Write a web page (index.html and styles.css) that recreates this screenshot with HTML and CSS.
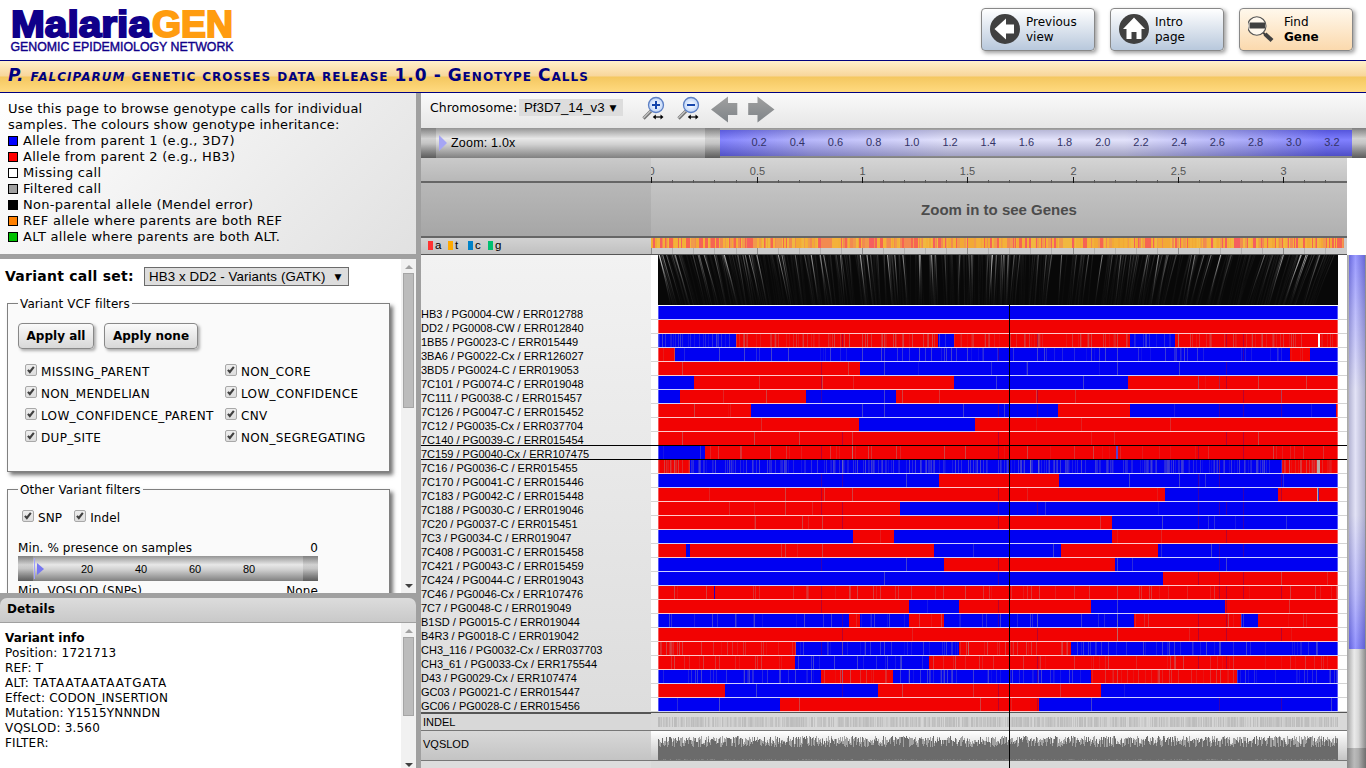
FILE: index.html
```html
<!DOCTYPE html>
<html lang="en">
<head>
<meta charset="utf-8">
<title>MalariaGEN - Genotype Calls</title>
<link rel="stylesheet" href="styles.css">
</head>
<body>
<svg class="defs" width="0" height="0"><defs>
<symbol id="check" viewBox="0 0 12 12"><path d="M2.300 5.800 4.600 8.400 9.400 2.200" fill="none" stroke="#404040" stroke-width="2.500"/></symbol>
</defs></svg>
<header class="top">
  <svg class="logo" width="240" height="56">
    <text x="11" y="36.500" class="logo-a" textLength="140" lengthAdjust="spacingAndGlyphs">Malaria</text>
    <text x="152" y="36.500" class="logo-b" textLength="81" lengthAdjust="spacingAndGlyphs">GEN</text>
    <text x="10.500" y="51" class="logo-c" textLength="223" lengthAdjust="spacingAndGlyphs">GENOMIC EPIDEMIOLOGY NETWORK</text>
  </svg>
  <nav class="actions">
    <button class="act blue"><svg width="30" height="30" viewBox="0 0 30 30"><circle cx="15" cy="15" r="15" fill="#404040"/><path d="M4.500 15 16 4.500V10.500H24V19.500H16V25.500Z" fill="#fff"/></svg><span>Previous<br>view</span></button>
    <button class="act blue"><svg width="30" height="30" viewBox="0 0 30 30"><circle cx="15" cy="15" r="15" fill="#404040"/><path d="M15 3.500 26 15H22.500V25H17.500V18H12.500V25H7.500V15H4Z" fill="#fff"/></svg><span>Intro<br>page</span></button>
    <button class="act cream"><svg width="30" height="30" viewBox="0 0 30 30"><path d="m15 18.500 2.500 2.500" stroke="#404040" stroke-width="2"/><path d="m17 20 7 6.500" stroke="#404040" stroke-width="4.200"/><circle cx="8.800" cy="12" r="9.200" fill="#fff8ee" stroke="#555" stroke-width="1.100"/><path d="M1.500 8.500h15.500v6H1.500z" fill="#404040"/></svg><span>Find<br><b>Gene</b></span></button>
  </nav>
</header>
<h1 class="title"><i>P. falciparum</i> genetic crosses data release 1.0 - Genotype Calls</h1>
<main class="main">
  <aside class="side">
    <section class="intro">
      <p>Use this page to browse genotype calls for individual<br>samples. The colours show genotype inheritance:</p>
      <ul>
        <li><i class="sw p1"></i>Allele from parent 1 (e.g., 3D7)</li>
        <li><i class="sw p2"></i>Allele from parent 2 (e.g., HB3)</li>
        <li><i class="sw miss"></i>Missing call</li>
        <li><i class="sw filt"></i>Filtered call</li>
        <li><i class="sw non"></i>Non-parental allele (Mendel error)</li>
        <li><i class="sw ref"></i>REF allele where parents are both REF</li>
        <li><i class="sw alt"></i>ALT allele where parents are both ALT.</li>
      </ul>
    </section>
    <section class="controls">
      <div class="controls-body">
        <div class="callset"><b>Variant call set:</b><span class="select">HB3 x DD2 - Variants (GATK)<i>▼</i></span></div>
        <fieldset class="vcf"><legend>Variant VCF filters</legend>
          <div class="btns"><button>Apply all</button><button>Apply none</button></div>
          <div class="checks">
            <label><svg class="cb"><use href="#check"/></svg>MISSING_PARENT</label><label><svg class="cb"><use href="#check"/></svg>NON_CORE</label>
            <label><svg class="cb"><use href="#check"/></svg>NON_MENDELIAN</label><label><svg class="cb"><use href="#check"/></svg>LOW_CONFIDENCE</label>
            <label><svg class="cb"><use href="#check"/></svg>LOW_CONFIDENCE_PARENT</label><label><svg class="cb"><use href="#check"/></svg>CNV</label>
            <label><svg class="cb"><use href="#check"/></svg>DUP_SITE</label><label><svg class="cb"><use href="#check"/></svg>NON_SEGREGATING</label>
          </div>
        </fieldset>
        <fieldset class="other"><legend>Other Variant filters</legend>
          <div class="types"><label><svg class="cb"><use href="#check"/></svg>SNP</label><label><svg class="cb"><use href="#check"/></svg>Indel</label></div>
          <div class="range-head"><span>Min. % presence on samples</span><span>0</span></div>
          <div class="range"><i class="cap"></i><div class="range-mid"><i class="bar"></i><i class="tri"></i><div class="nums"><span>20</span><span>40</span><span>60</span><span>80</span></div></div><i class="cap"></i></div>
          <div class="range-head second"><span>Min. VQSLOD (SNPs)</span><span>None</span></div>
        </fieldset>
      </div>
      <div class="scroll"><i class="up"></i><i class="thumb t1"></i><i class="down"></i></div>
    </section>
    <section class="details">
      <h2>Details</h2>
      <div class="details-row">
        <div class="details-body"><b>Variant info</b><br>Position: 1721713<br>REF: T<br>ALT: <span class="bp">TATAATAATAATGATA</span><br>Effect: CODON_INSERTION<br>Mutation: Y1515YNNNDN<br>VQSLOD: 3.560<br>FILTER:</div>
        <div class="scroll"><i class="up"></i><i class="thumb t2"></i><i class="down"></i></div>
      </div>
    </section>
  </aside>
  <section class="browser">
    <div class="toolbar"><span class="chr">Chromosome:</span><span class="chrsel">Pf3D7_14_v3<i>▼</i></span>
      <svg class="tools" width="140" height="34" viewBox="0 0 140 34">
        <defs><radialGradient id="lens"><stop offset="0" stop-color="#fff"/><stop offset="1" stop-color="#bfd5f8"/></radialGradient>
        <linearGradient id="arrow" x1="0" y1="0" x2="0" y2="1"><stop offset="0" stop-color="#a0a0a0"/><stop offset="1" stop-color="#7f8488"/></linearGradient></defs>
        <g id="glass"><path d="m2.500 25.500 7.500-7.500" stroke="#777" stroke-width="3.200"/><path d="m2.500 24.800 7-7" stroke="#ccc" stroke-width="1.200"/><circle cx="15" cy="12" r="7.500" fill="url(#lens)" stroke="#5c7fc4" stroke-width="1.300"/><path d="M13 24h8" stroke="#000" stroke-width="1.200"/><path d="m14.800 21.500-3 2.500 3 2.500zm4.700 0 3 2.500-3 2.500z" fill="#000"/></g>
        <use href="#glass" x="35"/>
        <path d="M11 12h8M15 8v8M46 12h8" stroke="#1646ac" stroke-width="2"/>
        <path d="M70 16.500 87 3.500V10H96.300V22H87V29.500Z" fill="url(#arrow)"/><path d="M133.500 16.500 116.500 3.500V10H107.200V22H116.500V29.500Z" fill="url(#arrow)"/>
      </svg>
    </div>
    <div class="navbar"><i class="cap"></i><div class="zoomer"><i class="tri"></i>Zoom: 1.0x</div><i class="cap"></i><div class="overview" id="overview"></div><i class="cap last"></i></div>
    <div class="ruler"><div class="rl"></div><svg id="ruler" width="696" height="25"></svg></div>
    <div class="genes"><div class="gl"></div><div class="gr">Zoom in to see Genes</div></div>
    <div class="seq"><div class="bases"><span><i class="a"></i>a</span><span><i class="t"></i>t</span><span><i class="c"></i>c</span><span><i class="g"></i>g</span></div><canvas id="seq" width="696" height="16"></canvas></div>
    <div class="lower">
      <div class="plots">
        <div class="geno"><ol class="names" id="names"></ol><canvas id="geno" width="696" height="457"></canvas></div>
        <div class="tracks"><div class="tnames"><div class="indel">INDEL</div><div class="vq">VQSLOD</div></div><canvas id="tracks" width="696" height="56"></canvas></div>
        <i class="line h1"></i><i class="line h2"></i><i class="line v"></i>
      </div>
      <div class="vscroll"><i class="vthumb"></i><i class="vrest"></i><i class="vend"></i></div>
    </div>
  </section>
</main>
<script src="plot.js"></script>
</body>
</html>
```

FILE: styles.css
```css
* { box-sizing: border-box; }
body { margin: 0; width: 1366px; height: 768px; overflow: hidden; background: #fff; font: 12px/15px "DejaVu Sans", Verdana, sans-serif; letter-spacing: .1px; color: #000; display: flex; flex-direction: column; }
button { font: inherit; letter-spacing: 0; color: inherit; padding: 0; }
canvas, svg { display: block; flex: none; }
.defs { position: absolute; }
.top { height: 60px; flex: none; display: flex; justify-content: space-between; letter-spacing: 0; }
.logo-a, .logo-b { font: bold 37px "Liberation Sans", Arial, sans-serif; fill: #10008a; stroke: #10008a; stroke-width: 2px; }
.logo-b { fill: #ff9c10; stroke: #ff9c10; }
.logo-c { font: 12.5px "Liberation Sans", Arial, sans-serif; fill: #10008a; stroke: #10008a; stroke-width: .4px; }
.actions { display: flex; gap: 15px; padding: 8px 13px 0 0; }
.act { width: 114px; height: 43px; display: flex; align-items: center; gap: 6px; padding-left: 8px; border: 1px solid #888; border-radius: 4px; text-align: left; box-shadow: 2px 2px 4px rgba(0,0,0,.4); }
.act svg { margin-bottom: 1px; }
.act.blue { background: linear-gradient(#fff, #b8c8dc); }
.act.cream { background: linear-gradient(#fff8ec, #fbd9ad); }
.title { margin: 0; height: 33px; flex: none; border-top: 1px solid #000080; border-bottom: 1px solid #000080; background: linear-gradient(#ffefcb, #f8d69a 49%, #f4c75f 51%, #ffda80); font: bold 17px/28px "DejaVu Sans", sans-serif; letter-spacing: 1.02px; word-spacing: -1px; font-variant: small-caps; color: #000080; padding-left: 8px; white-space: nowrap; }
.main { display: flex; height: 675px; }
.side { width: 421px; flex: none; border-right: 5px solid #a0a0a0; display: flex; flex-direction: column; }
.intro { height: 166px; flex: none; border-bottom: 5px solid #a0a0a0; padding: 8px; background: linear-gradient(135deg, #fff, #f0f0f0 50%, #e1e1e1); font-size: 13px; line-height: 16px; letter-spacing: .18px; white-space: nowrap; }
.intro p, .intro ul { margin: 0; padding: 0; list-style: none; }
.intro li { display: flex; align-items: center; gap: 5px; letter-spacing: .28px; }
.sw { width: 10px; height: 10px; border: 1px solid #000; }
.p1 { background: #00f; } .p2 { background: #f00; } .miss { background: #fff; } .filt { background: #a0a0a0; } .non { background: #000; } .ref { background: #ff8000; } .alt { background: #00c000; }
.controls { height: 339px; flex: none; border-bottom: 5px solid #a0a0a0; display: flex; overflow: hidden; }
.controls-body { width: 401px; padding: 8px 11px 0 7px; overflow: hidden; }
.callset { height: 19px; display: flex; align-items: center; margin: 0 0 10px -2px; font-size: 14px; letter-spacing: .25px; white-space: nowrap; }
.callset b { width: 139px; flex: none; }
.select { flex: none; border: 1px solid #6b6b6b; background: #ddd; width: 205px; height: 19px; display: flex; align-items: center; padding-left: 4px; font: 13.3px "Liberation Sans", Arial, sans-serif; letter-spacing: .1px; }
.select i, .chrsel i { font: 9px "DejaVu Sans", sans-serif; margin-left: 9px; }
fieldset { margin: 0 0 10px; width: 383px; min-width: 0; border: 1px solid #808080; background: #fafafa; padding: 0 10px; box-shadow: 3px 3px 4px rgba(0,0,0,.55); }
legend { padding: 0 2px; height: 15px; line-height: 16px; }
.vcf { height: 176px; } .other { height: 180px; }
.btns { display: flex; gap: 10px; margin-top: 12px; }
.btns button { width: 76px; height: 26px; font-weight: bold; border: 1px solid #888; border-radius: 4px; background: linear-gradient(#fafafa, #d8d8d8); box-shadow: 2px 2px 3px rgba(0,0,0,.3); }
.btns button + button { width: 94px; }
.checks { display: grid; grid-template-columns: 200px 150px; grid-auto-rows: 22px; margin: 12px 0 0 7px; letter-spacing: .34px; }
label { display: flex; align-items: center; gap: 4px; white-space: nowrap; }
.cb { width: 12px; height: 12px; margin-bottom: 4px; border: 1px solid #a8a8a8; border-radius: 2px; background: linear-gradient(#eee, #ddd); overflow: visible; }
.types { display: flex; gap: 12px; margin: 13px 0 0 4px; height: 16px; }
.range-head { display: flex; justify-content: space-between; width: 300px; margin-top: 15px; }
.range-head.second { margin-top: 3px; }
.range { width: 300px; height: 25px; display: flex; background: linear-gradient(#959595, #e8e8e8 35%, #d0d0d0 55%, #808080); }
.cap { width: 15px; flex: none; background: linear-gradient(rgba(0,0,0,.14), rgba(0,0,0,.08) 50%, rgba(0,0,0,.28)); }
.last { width: 14px; }
.range-mid { width: 270px; display: flex; align-items: center; }
.bar { width: 1px; height: 21px; margin-left: 1px; background: #a0a0ff; }
.tri { width: 0; border: solid transparent; border-width: 6px 0 6px 7px; border-left-color: #7777f0; margin-left: 2px; }
.nums { display: flex; font: 11px "Liberation Sans", Arial, sans-serif; letter-spacing: 0; margin-left: 16px; } .nums span { width: 54px; text-align: center; }
.scroll { width: 15px; flex: none; background: #f1f1f1; display: flex; flex-direction: column; align-items: center; }
.up { border: solid transparent; border-width: 0 4px 4px; border-bottom-color: #a0a0a0; margin: 6px 0 4px; }
.down { border: solid transparent; border-width: 4px 4px 0; border-top-color: #404040; margin: auto 0 5px; }
.thumb { width: 11px; background: #bcbcbc; border: 1px solid #a5a5a5; flex: none; }
.t1 { height: 135px; } .t2 { height: 79px; }
.details { flex: 1; display: flex; flex-direction: column; background: #a0a0a0; }
.details h2 { margin: 0; height: 25px; flex: none; border-radius: 7px 7px 0 0; border-bottom: 1px solid #a0a0a0; background: linear-gradient(#dcdcdc, #c9c9c9); font: bold 12px/22px "DejaVu Sans", sans-serif; padding-left: 7px; }
.details-row { flex: 1; display: flex; background: #fff; }
.details-body { flex: 1; padding: 8px 0 0 5px; letter-spacing: .2px; }
.bp { letter-spacing: .95px; }
.details-body b { letter-spacing: 0; }
.details .down { margin-bottom: 1px; }
.browser { width: 945px; flex: none; display: flex; flex-direction: column; letter-spacing: 0; }
.toolbar { height: 35px; flex: none; display: flex; background: linear-gradient(#fafafa, #e6e6e6); padding-left: 9px; font-size: 12.5px; }
.chr { width: 89px; margin-top: 7px; white-space: nowrap; }
.chrsel { margin-top: 6px; height: 17px; width: 104px; background: #ddd; padding-left: 5px; display: flex; align-items: center; font: 13.3px "Liberation Sans", Arial, sans-serif; }
.chrsel i { margin-left: 5px; }
.tools { margin-left: 18px; }
.navbar { height: 30px; flex: none; display: flex; background: linear-gradient(#959595, #e8e8e8 35%, #d0d0d0 55%, #808080); }
.zoomer { width: 269px; flex: none; display: flex; align-items: center; gap: 4px; font: 12.5px "Liberation Sans", Arial, sans-serif; letter-spacing: .2px; }
.zoomer .tri { margin-left: 3px; border-width: 8px 0 8px 8px; border-left-color: #a5a5f5; }
.overview { width: 632px; flex: none; margin: 2px 0; display: flex; padding-left: 20px; background: linear-gradient(rgba(40,40,80,.2), rgba(255,255,255,.2) 38%, rgba(40,40,80,.32)), linear-gradient(90deg, #6666ff, #a6a6fa 14%, #dcdcfa 36%, #dcdcfa 64%, #9595fa 84%, #6161ff 96%); font: 11px/25px "Liberation Sans", Arial, sans-serif; color: #333366; }
.overview span { width: 38.2px; flex: none; text-align: center; }
.ruler { height: 25px; flex: none; display: flex; width: 926px; }
.rl { width: 230px; background: linear-gradient(#cacaca, #b8b8b8); border-bottom: 2px solid #666; }
#ruler { background: linear-gradient(#d5d5d5, #c2c2c2); font: 11px "Liberation Sans", Arial, sans-serif; }
.genes { height: 55px; flex: none; display: flex; width: 926px; border-bottom: 2px solid #666; }
.gl { width: 230px; background: linear-gradient(#b8b8b8, #a6a6a6); }
.gr { flex: 1; background: linear-gradient(#c4c4c4, #b0b0b0); text-align: center; font: bold 15px/53px "Liberation Sans", Arial, sans-serif; color: #4c4c4c; }
.seq { height: 17px; flex: none; display: flex; width: 926px; border-bottom: 1px solid #555; }
.bases { width: 230px; background: linear-gradient(#d2d2d2, #c0c0c0); padding-left: 7px; display: flex; font: 11.5px/14px "Liberation Sans", Arial, sans-serif; }
.bases span { width: 20px; display: flex; gap: 2px; }
.bases i { width: 5px; height: 9px; margin-top: 3px; }
.a { background: #ff3232; } .t { background: #ffaa00; } .c { background: #0082c8; } .g { background: #00c070; }
.lower { display: flex; height: 513px; }
.plots { position: relative; width: 926px; flex: none; }
.geno { display: flex; height: 457px; }
.names { width: 230px; margin: 0; padding: 52px 0 0; list-style: none; background: linear-gradient(#f2f2f2, #ddd); font: 11px/14px "Liberation Sans", Arial, sans-serif; }
.names li { height: 14px; white-space: nowrap; }
.tracks { display: flex; height: 56px; }
.tnames { width: 230px; font: 11px "Liberation Sans", Arial, sans-serif; background: #ddd; border-top: 2px solid #555; }
.tnames div { padding-left: 2px; display: flex; align-items: center; }
.indel { height: 17px; padding-bottom: 1px; background: #d8d8d8; border-bottom: 1px solid #777; } .vq { height: 30px; padding-bottom: 3px; background: linear-gradient(#d8d8d8, #c4c4c4); border-bottom: 1px solid #777; }
.line { position: absolute; background: #000; }
.h1, .h2 { left: 0; width: 926px; height: 1px; top: 190px; } .h2 { top: 204px; }
.v { left: 588px; top: 50px; width: 1px; height: 463px; }
.vscroll { width: 19px; display: flex; flex-direction: column; background: linear-gradient(90deg, #a5a5a5, #eaeaea 38%, #d8d8d8 60%, #8a8a8a); }
.vthumb { height: 394px; margin: 0 1px 0 2px; background: linear-gradient(90deg, rgba(80,80,120,.25), rgba(255,255,255,.3) 40%, rgba(80,80,120,.3)), linear-gradient(#7070ff, #a0a0fa 14%, #d6d6f2 34%, #d6d6f2 66%, #a0a0fa 86%, #6666ff); }
.vrest { height: 99px; } .vend { flex: 1; background: rgba(0,0,0,.2); }
```

FILE: plot.js
```js
// Columns: sample label, first parental colour, switch points, density of miscalls, marked positions
const samples = [
  ["HB3 / PG0004-CW / ERR012788", "B", [], 0, []],
  ["DD2 / PG0008-CW / ERR012840", "R", [], 0, []],
  ["1BB5 / PG0023-C / ERR015449", "B", [736, 938, 954, 1130, 1175], .27, [744, 834, 849, 867, 903, 932, 1038, 1080, 1088, 1117, 1178, 1252, 1262]],
  ["3BA6 / PG0022-Cx / ERR126027", "R", [675, 1290, 1310], .08, [674, 719, 744, 771, 788, 862, 881, 919, 951, 967, 1037, 1091, 1105, 1117]],
  ["3BD5 / PG0024-C / ERR019053", "R", [860], .01, [682, 884, 1027, 1117, 1179]],
  ["7C101 / PG0074-C / ERR019048", "B", [694, 954, 1128], .006, [822, 1083, 1198, 1258]],
  ["7C111 / PG0038-C / ERR015457", "B", [680, 806, 896], .006, [766, 884, 902, 1281]],
  ["7C126 / PG0047-C / ERR015452", "R", [751, 1058, 1130, 1336], .006, [694, 862, 884]],
  ["7C12 / PG0035-Cx / ERR037704", "R", [859, 975], .005, []],
  ["7C140 / PG0039-C / ERR015454", "R", [], .006, [682, 754, 799, 852, 1258]],
  ["7C159 / PG0040-Cx / ERR107475", "B", [705], .05, [770, 852, 944, 965, 1027, 1093, 1117]],
  ["7C16 / PG0036-C / ERR015455", "R", [690, 1282], .36, [674, 699, 842, 857, 909, 955, 968, 980, 1030, 1038, 1081, 1289, 1318]],
  ["7C170 / PG0041-C / ERR015446", "B", [939, 1059], .004, [906, 1129, 1179]],
  ["7C183 / PG0042-C / ERR015448", "R", [1165, 1278], .006, [785, 852, 1318]],
  ["7C188 / PG0030-C / ERR019046", "R", [900], .004, [785]],
  ["7C20 / PG0037-C / ERR015451", "R", [1112], .01, [802, 822, 1162]],
  ["7C3 / PG0034-C / ERR019047", "B", [853, 894, 1112], .004, []],
  ["7C408 / PG0031-C / ERR015458", "R", [686, 690, 934, 1061, 1158], .008, [785, 822, 1053, 1211]],
  ["7C421 / PG0043-C / ERR015459", "B", [944, 1115], .003, [906, 1117, 1226]],
  ["7C424 / PG0044-C / ERR019043", "B", [1163], .003, [884, 1281]],
  ["7C46 / PG0046-Cx / ERR107476", "R", [], .07, [674, 849, 857, 965, 1117]],
  ["7C7 / PG0048-C / ERR019049", "R", [909, 959, 1091, 1225], .004, [1117]],
  ["B1SD / PG0015-C / ERR019044", "B", [849, 860, 909, 944, 1134, 1241, 1258], .06, [669, 735, 754, 804, 1037, 1117]],
  ["B4R3 / PG0018-C / ERR019042", "R", [], .008, [1117]],
  ["CH3_116 / PG0032-Cx / ERR037703", "R", [796, 959, 1071], .14, [666, 670, 842, 884, 968, 1206, 1220]],
  ["CH3_61 / PG0033-Cx / ERR175544", "R", [795, 929], .09, [674, 813, 857, 901, 955]],
  ["D43 / PG0029-Cx / ERR107474", "B", [821, 893, 1091, 1237], .17, [744, 842, 850, 909, 944, 1038, 1117, 1220]],
  ["GC03 / PG0021-C / ERR015447", "R", [725, 878, 1101], .004, [756, 902]],
  ["GC06 / PG0028-C / ERR015456", "B", [780, 1039], .006, [719, 799, 980, 1091]]
];
let state = 77;
const rnd = () => (state = (state * 16807) % 2147483647) / 2147483647;
const ctxOf = id => document.getElementById(id).getContext("2d");
const ORIGIN = 651, LEFT = 7, RIGHT = 687;
const tick = i => Math.floor(i * 21.06 + .8);

document.getElementById("names").innerHTML = samples.map(s => `<li>${s[0]}</li>`).join("");
let labels = "";
for (let i = 1; i <= 16; i++) labels += `<span>${(i / 5).toFixed(1)}</span>`;
document.getElementById("overview").innerHTML = labels;

let marks = '<path d="M0 24H696" stroke="#666" stroke-width="2"/>';
for (let i = 0; i < 33; i++) {
  const x = tick(i) + .5, major = i % 5 === 0;
  marks += `<path d="M${x} ${major ? 19 : 22}V25" stroke="${major ? "#111" : "#555"}"/>`;
  if (major) marks += `<text x="${x}" y="17" text-anchor="middle" fill="#555">${i / 10}</text>`;
}
document.getElementById("ruler").innerHTML = marks;

// Base composition strip
const seq = ctxOf("seq");
seq.fillStyle = "#cbcbcb"; seq.fillRect(0, 0, 696, 16);
for (let i = 0; i < 33; i++) {
  seq.fillStyle = i % 5 ? "rgba(0,0,0,.12)" : "rgba(0,0,0,.3)";
  seq.fillRect(tick(i), 0, 1, 16);
}
const tones = ["#f4b13a", "#f2b038", "#f2a936", "#f19a4c", "#f28a50", "#f66452", "#f55f5f", "#f0b840"];
let tone = 0;
for (let x = 0; x < 693; x++) {
  if (rnd() < .6) tone = Math.floor(rnd() * 8);
  seq.fillStyle = tones[tone]; seq.fillRect(x, 0, 1, 10);
}

// Links between genomic position and variant order
const g = ctxOf("geno");
g.fillStyle = "#fff"; g.fillRect(0, 0, 696, 457);
g.fillStyle = "#080808"; g.fillRect(LEFT, 0, 680, 50);
g.save(); g.beginPath(); g.rect(LEFT, 0, 680, 50); g.clip();
for (let i = 0; i < 400; i++) {
  const x = LEFT + rnd() * 680, lean = 14 * (1 - (x - LEFT) / 300) + (rnd() - .5) * 5;
  const a = Math.pow(rnd(), 6) * .75 + .06;
  const fade = g.createLinearGradient(0, 0, 0, 50);
  fade.addColorStop(0, `rgba(230,230,230,${a})`); fade.addColorStop(.5, `rgba(200,200,200,${a * .4})`); fade.addColorStop(1, "rgba(100,100,100,.04)");
  g.strokeStyle = fade; g.beginPath(); g.moveTo(x, 0); g.quadraticCurveTo(x + lean * .55, 25, x + lean, 50); g.stroke();
}
g.restore();

const palette = { B: "#0000f2", R: "#f20202" };
const shared = [821, 842, 998, 1037, 1198, 1219, 1226, 1243, 1281];
samples.forEach(([, first, cuts, density, marked], row) => {
  const y = 51 + row * 14;
  g.fillStyle = "#d4d4d4"; g.fillRect(0, y + 13, 696, 1);
  let colour = first, from = 658;
  [...cuts, 1338].forEach(to => {
    g.fillStyle = palette[colour]; g.fillRect(from - ORIGIN, y, to - from, 13);
    g.fillStyle = colour === "B" ? "#ccd0ff" : "#ffcaca"; g.fillRect(from - ORIGIN, y + 13, to - from, 1);
    for (let x = from; x < to; x++) if (rnd() < density) {
      g.fillStyle = `rgba(165,165,165,${.08 + rnd() * .3})`; g.fillRect(x - ORIGIN, y, 1, 13);
    }
    if (row > 1) shared.forEach(x => {
      if (x > from && x < to && rnd() < .4) {
        g.fillStyle = colour === "B" ? "rgba(150,0,60,.35)" : "rgba(80,0,130,.35)"; g.fillRect(x - ORIGIN, y, 1, 13);
      }
    });
    from = to; colour = colour === "B" ? "R" : "B";
  });
  marked.forEach(x => { g.fillStyle = "rgba(160,160,160,.4)"; g.fillRect(x - ORIGIN, y, 1, 13); });
  g.fillStyle = "rgba(255,255,255,.35)"; g.fillRect(LEFT, y, 1, 13); g.fillRect(RIGHT - 1, y, 1, 13);
});
g.fillStyle = "#fff"; g.fillRect(1318 - ORIGIN, 79, 2, 13);
g.fillStyle = "#b9aaa5"; g.fillRect(1317 - ORIGIN, 205, 3, 13);
g.fillStyle = "#b9aaa5"; g.fillRect(1317 - ORIGIN, 233, 1, 13);
g.fillStyle = "#3333cc"; g.fillRect(1318 - ORIGIN, 233, 1, 13);
g.fillStyle = "#5a3fd0"; g.fillRect(1116 - ORIGIN, 191, 2, 13);
g.fillStyle = "#2200c0"; g.fillRect(714 - ORIGIN, 331, 1, 13);

// Variant property tracks
const t = ctxOf("tracks");
t.fillStyle = "#d9d9d9"; t.fillRect(0, 0, 696, 56);
t.fillStyle = "#555"; t.fillRect(0, 0, 696, 1);
for (let x = LEFT; x < RIGHT; x++) {
  const v = 188 + Math.floor(Math.pow(rnd(), 1.6) * 28);
  t.fillStyle = `rgb(${v},${v},${v})`; t.fillRect(x, 5, 1, 10);
}
t.fillStyle = "#777"; t.fillRect(0, 18, 696, 1);
const vg = t.createLinearGradient(0, 19, 0, 48);
vg.addColorStop(0, "#fff"); vg.addColorStop(1, "#c4c4c4");
t.fillStyle = vg; t.fillRect(0, 19, 696, 29);
for (let x = LEFT; x < RIGHT; x++) {
  const light = 2 + rnd() * 8, dark = Math.pow(rnd(), 1.5) * 11;
  t.fillStyle = "#a2a2a2"; t.fillRect(x, Math.round(34 - light), 1, 14 + light);
  t.fillStyle = "#6b6b6b"; t.fillRect(x, Math.round(35 - dark), 1, 13 + dark);
}
t.fillStyle = "#777"; t.fillRect(0, 48, 696, 1);
```
